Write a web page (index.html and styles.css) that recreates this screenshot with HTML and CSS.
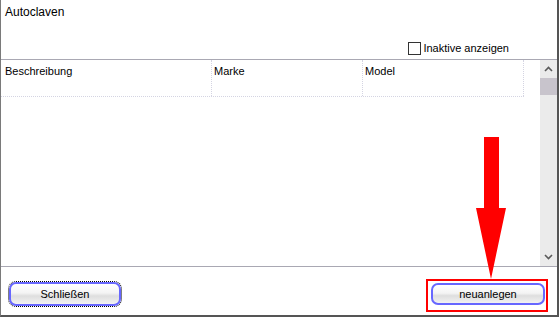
FILE: index.html
```html
<!DOCTYPE html>
<html lang="de">
<head>
  <meta charset="UTF-8">
  <title>Autoclaven</title>
  <link rel="stylesheet" href="styles.css">
</head>
<body>
  <div class="window">
    <div class="title">Autoclaven</div>

    <div class="options">
      <label class="check"><span class="box"></span>Inaktive anzeigen</label>
    </div>

    <div class="grid">
      <div class="table">
        <div class="head">
          <div class="col c1">Beschreibung</div>
          <div class="col c2">Marke</div>
          <div class="col c3">Model</div>
        </div>
      </div>
      <div class="scrollbar">
        <div class="sb-btn">
          <svg width="9" height="6" viewBox="0 0 9 6"><path d="M1 5 L4.5 1.5 L8 5" fill="none" stroke="#5a5a5a" stroke-width="1.6"/></svg>
        </div>
        <div class="sb-thumb"></div>
        <div class="sb-track"></div>
        <div class="sb-btn">
          <svg width="9" height="6" viewBox="0 0 9 6"><path d="M1 1 L4.5 4.5 L8 1" fill="none" stroke="#5a5a5a" stroke-width="1.6"/></svg>
        </div>
      </div>
    </div>

    <div class="footer">
      <button class="btn focus">Schließen</button>
      <span class="highlight"><button class="btn">neuanlegen</button></span>
    </div>

    <!-- roter Hinweispfeil -->
    <svg class="arrow" width="31" height="142" viewBox="0 0 31 142">
      <polygon points="8,0 23,0 23,71 30,71 15,142 0,71 8,71" fill="#ff0000"/>
    </svg>
  </div>
</body>
</html>
```

FILE: styles.css
```css
* { box-sizing: border-box; }
body { margin: 0; background: #fff; font-family: "Liberation Sans", Arial, sans-serif; font-size: 11px; color: #000; }

.window { position: relative; width: 559px; height: 317px; display: flex; flex-direction: column; border-left: 1px solid #7a7a7a; border-right: 2px solid #555; border-bottom: 2px solid #555; }

.title { height: 20px; padding: 4px 4px 0; font-size: 12px; line-height: 16px; }

.options { height: 39px; padding: 18px 48px 0 0; display: flex; justify-content: flex-end; }
.check { display: flex; align-items: center; gap: 2px; line-height: 13px; }
.check .box { width: 13px; height: 13px; border: 1px solid #333; background: #fff; }

.grid { height: 208px; display: flex; border-top: 1px solid #a9a8b3; border-bottom: 1px solid #a9a8b3; }
.table { flex: 1; }
.head { display: flex; width: 523px; height: 37px; border-bottom: 1px dotted #d4d4e2; }
.col { border-right: 1px dotted #d4d4e2; padding: 5px 2px 0; line-height: 13px; }
.c1 { width: 211px; padding-left: 4px; }
.c2 { width: 151px; }
.c3 { width: 161px; }

.scrollbar { width: 17px; display: flex; flex-direction: column; background-color: #ebebeb; background-image: radial-gradient(#f6f6f6 0.5px, transparent 0.6px); background-size: 2px 2px; }
.sb-btn { height: 18px; display: flex; align-items: center; justify-content: center; }
.sb-thumb { height: 17px; background-color: #c8c4cc; background-image: radial-gradient(#dcdade 0.5px, transparent 0.6px); background-size: 2px 2px; }
.sb-track { flex: 1; }

.footer { flex: 1; display: flex; justify-content: space-between; align-items: flex-start; padding: 12px 9px 0 8px; }

.btn { width: 112px; height: 22px; border: 2px solid #6767ff; border-radius: 7px; background: linear-gradient(#ffffff, #f4f4f4 45%, #dedede 60%, #f2f2f2); font-family: "Liberation Sans", Arial, sans-serif; font-size: 11px; color: #000; padding: 0; }
.btn.focus { width: 112px; height: 24px; margin-top: 3px; outline: 1px dotted #000; outline-offset: 0; }

.highlight { display: block; border: 2px solid #f00; padding: 2px 1px 5px 3px; }
.highlight .btn { width: 114px; height: 22px; }

.arrow { position: absolute; left: 475px; top: 137px; }
```
